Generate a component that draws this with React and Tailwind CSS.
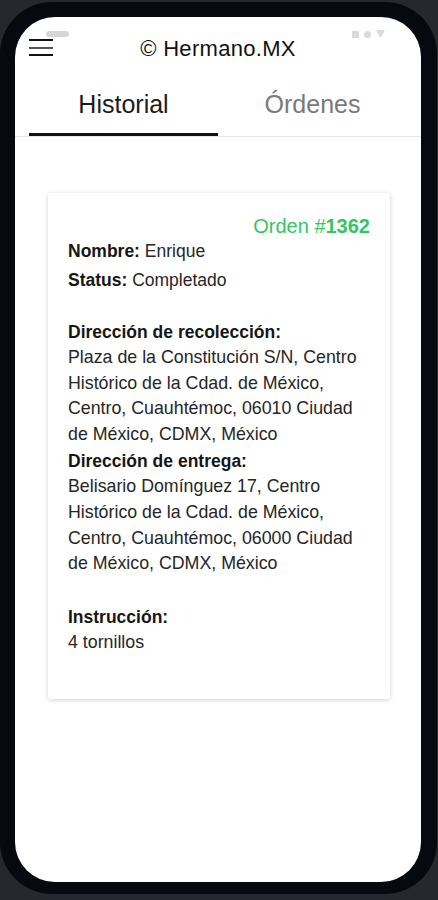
import React from "react";

const font = { fontFamily: '"Liberation Sans", Arial, sans-serif' };

const Menu = () => (
  <div className="flex flex-col gap-[5.5px] w-[24px]">
    <span className="h-[2px] bg-[#111]" />
    <span className="h-[2px] bg-[#555]" />
    <span className="h-[2px] bg-[#111]" />
  </div>
);

const StatusBar = () => (
  <div className="absolute top-[13px] left-0 right-0 px-[31px] flex justify-between items-center pointer-events-none">
    <span className="w-[23px] h-[6px] rounded-full bg-[#d6d6d6]" />
    <div className="flex items-center gap-[5px] mr-[5px]">
      <span className="w-[7px] h-[7px] bg-[#dadada]" />
      <span className="w-[7px] h-[7px] rounded-full bg-[#dadada]" />
      <svg width="9" height="8" viewBox="0 0 9 8">
        <path d="M0 0h9L4.5 8z" fill="#dadada" />
      </svg>
    </div>
  </div>
);

const Label = ({ children, className = "" }) => (
  <div className={"font-bold text-[#161616] leading-[26px] " + className}>{children}</div>
);

const Line = ({ children }) => (
  <div className="text-[#262626] text-[17.8px] leading-[25.6px]">{children}</div>
);

export default function App() {
  return (
    <div className="w-[438px] h-[900px] bg-[#25292f] pt-[2px]" style={font}>
      <div className="w-[437px] h-[892px] rounded-[52px] bg-[#060a10] pt-[15px] pb-[12px] pl-[15px] pr-[16px]">
        <div className="relative w-[406px] h-[865px] rounded-[40px] bg-white overflow-hidden flex flex-col">
          <StatusBar />

          <header className="h-[60px] grid grid-cols-[52px_1fr_52px] items-center">
            <div className="pl-[14px] pt-[1px]">
              <Menu />
            </div>
            <h1 className="text-center text-[22px] tracking-[0.3px] text-[#111] pt-[2px]">© Hermano.MX</h1>
            <div />
          </header>

          <nav className="border-b border-[#e8e8e8]">
            <div className="flex px-[14px]">
              <button className="flex-1 h-[59px] flex items-center justify-center text-[25px] text-[#1c1c1c] border-b-[3px] border-[#111] -mb-[1px]">
                Historial
              </button>
              <button className="flex-1 h-[59px] flex items-center justify-center text-[25px] text-[#7a7a7a] pb-[3px]">
                Órdenes
              </button>
            </div>
          </nav>

          <main className="pt-[56px] pl-[33px]">
            <div className="w-[342px] bg-white rounded-[3px] shadow-[0_1px_5px_rgba(0,0,0,0.18)] pt-[21px] pb-[44px] px-[20px] text-[17.5px]">
              <div className="text-right leading-[24px] text-[20px] text-[#34c565]">
                Orden #<span className="font-bold">1362</span>
              </div>
              <div className="leading-[26px] text-[#262626]">
                <span className="font-bold text-[#161616]">Nombre:</span> Enrique
              </div>
              <div className="leading-[26px] mt-[3px] text-[#262626]">
                <span className="font-bold text-[#161616]">Status:</span> Completado
              </div>

              <Label className="mt-[26px]">Dirección de recolección:</Label>
              <Line>Plaza de la Constitución S/N, Centro</Line>
              <Line>Histórico de la Cdad. de México,</Line>
              <Line>Centro, Cuauhtémoc, 06010 Ciudad</Line>
              <Line>de México, CDMX, México</Line>

              <Label className="mt-[1px]">Dirección de entrega:</Label>
              <Line>Belisario Domínguez 17, Centro</Line>
              <Line>Histórico de la Cdad. de México,</Line>
              <Line>Centro, Cuauhtémoc, 06000 Ciudad</Line>
              <Line>de México, CDMX, México</Line>

              <Label className="mt-[27px]">Instrucción:</Label>
              <Line>4 tornillos</Line>
            </div>
          </main>
        </div>
      </div>
    </div>
  );
}
